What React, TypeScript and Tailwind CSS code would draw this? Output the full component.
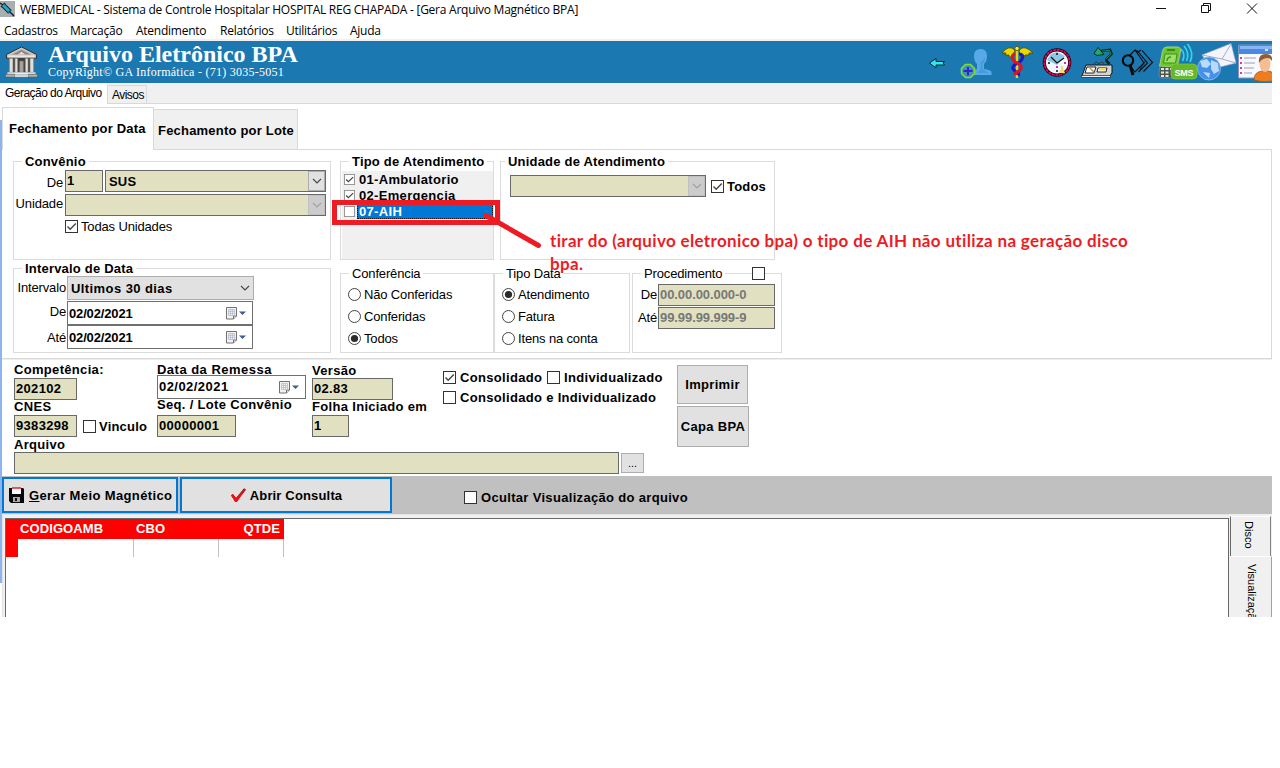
import React from "react";

const BOLD = "font-bold text-[13px] leading-[14px] tracking-[0.32px] whitespace-nowrap";
const ARIALB = "font-bold text-[13px] leading-[14px] tracking-[0.2px] whitespace-nowrap";
const REG = "text-[13px] leading-[14px] tracking-[-0.15px] whitespace-nowrap";
const FIELD = "border border-[#696969] bg-[#e1e1c1] box-border shrink-0";

function Check({ on = false, small = false }: { on?: boolean; small?: boolean }) {
  return (
    <svg className={small ? "h-[11px] w-[11px] shrink-0" : "h-[13px] w-[13px] shrink-0"} viewBox="0 0 13 13">
      <rect x="0.5" y="0.5" width="12" height="12" fill="#fff" stroke={small ? "#8a8a8a" : "#333"} />
      {on && <path d="M2.500 6.500 5.200 9.200 10.800 3.600" fill="none" stroke="#444" strokeWidth="1.400" />}
    </svg>
  );
}

function Radio({ on = false, label }: { on?: boolean; label: string }) {
  return (
    <div className="flex h-[22px] items-center gap-[3px]">
      <svg className="h-[13px] w-[13px] shrink-0" viewBox="0 0 13 13">
        <circle cx="6.5" cy="6.5" r="6" fill="#fff" stroke="#444" />
        {on && <circle cx="6.5" cy="6.5" r="3.6" fill="#2b2b2b" />}
      </svg>
      <span className={`pt-[2px] ${REG}`}>{label}</span>
    </div>
  );
}

function Chevron({ color = "#444" }: { color?: string }) {
  return (
    <svg className="h-[6px] w-[10px] shrink-0" viewBox="0 0 10 6">
      <path d="M1 1 5 5 9 1" fill="none" stroke={color} strokeWidth="1.1" />
    </svg>
  );
}

function Combo({ value = "", disabled = false, className }: { value?: string; disabled?: boolean; className: string }) {
  return (
    <div className={`${FIELD} flex h-[22px] ${className}`}>
      <span className="flex-1 pl-[3px] text-[13px] font-bold leading-[21px] tracking-[0.2px]">{value}</span>
      <span className={disabled ? "flex w-[17px] items-center justify-center border border-[#c0c0c0] bg-[#cccccc]" : "flex w-[17px] items-center justify-center border border-[#adadad] bg-[#e1e1e1]"}>
        <Chevron color={disabled ? "#a0a0a0" : "#444"} />
      </span>
    </div>
  );
}

function DateField({ value, className, textClass }: { value: string; className: string; textClass: string }) {
  return (
    <div className={`flex h-[24px] shrink-0 items-center border border-[#707070] bg-white pl-px ${className}`}>
      <span className={`flex-1 ${textClass}`}>{value}</span>
      <svg className="mr-[6px] h-[13px] w-[20px]" viewBox="0 0 20 13">
        <path d="M.5 .5h10v8.500l-3 3h-7z" fill="#f4f2f0" stroke="#75706c" />
        <path d="M10.500 9h-3v3" fill="#ddd" stroke="#75706c" />
        <path d="M2.500 2.500h6v6h-6zM2.500 4.500h6M2.500 6.500h6M4.500 2.500v6M6.500 2.500v6" fill="none" stroke="#b4bed0" strokeWidth=".8" />
        <path d="M13 4.500h7L16.500 8z" fill="#395d94" />
      </svg>
    </div>
  );
}

function Group({ title, bold = false, className, legend, children }: { title: string; bold?: boolean; className: string; legend: string; children?: React.ReactNode }) {
  return (
    <section className={`shrink-0 border border-[#dcdcdc] ${className}`}>
      <h3 className={`-mt-[8px] h-[14px] w-fit bg-white pt-px ${bold ? ARIALB : REG} ${legend}`}>{title}</h3>
      {children}
    </section>
  );
}

function Field({ value, className, textClass = "text-[13px] tracking-[0.32px]" }: { value?: string; className: string; textClass?: string }) {
  return <div className={`${FIELD} h-[22px] overflow-hidden whitespace-nowrap pl-px font-bold leading-[20px] ${textClass} ${className}`}>{value}</div>;
}

function BuildingIcon() {
  return (
    <svg className="h-[32px] w-[33px] shrink-0" viewBox="0 0 34 34">
      <path d="M1 9 17 1l16 8v4H1z" fill="#c7c2bd" stroke="#2f2b2a" />
      <path d="M7 9 17 4l10 5z" fill="#8d8883" />
      <path d="M13 9l4-3 4 3z" fill="#e6e1dc" />
      <path d="M3 10h28v2H3z" fill="#ece9e4" />
      <path d="M4 13h26v15H4z" fill="#423d3b" />
      <g fill="#e2dfda" stroke="#76716e" strokeWidth=".7">
        <path d="M4 13h4v15H4zM10 13h3v15h-3zM21 13h3v15h-3zM26 13h4v15h-4z" />
        <path d="M15 16h4v12h-4z" fill="#a8a39f" />
      </g>
      <path d="M2 28h30v2H2z" fill="#f0eeea" />
      <path d="M0 30h10v3H0zM24 30h10v3H24z" fill="#b9b4ae" stroke="#555" strokeWidth=".6" />
      <path d="M10 30h14v3H10z" fill="#d8d4cf" />
    </svg>
  );
}

function ToolbarIcons() {
  return (
    <svg className="h-[42px] w-[352px] shrink-0" viewBox="920 41 352 42">
      {/* back arrow */}
      <path d="M929.500 63 936 58.500v3h8.500l-1.500 1.500 1.500 2H936v3z" fill="#32e8ef" stroke="#08282e" strokeWidth="1" />
      {/* add user */}
      <g fill="#58a9e8">
        <path d="M974 56q0-7 6.500-7t6.500 7q0 5-3 8v5q7 1 7.500 3v3h-20q0-5 5.500-6v-5q-3-3-3-8z" />
      </g>
      <path d="M985 57q0 5-2.500 7v5l7 4h-12l3-4v-6z" fill="#3c93d6" opacity=".6" />
      <path d="M965.500 64.500h5l4 4v5l-4 4h-5l-4-4v-5z" fill="#3d91bd" stroke="#7fe02b" strokeWidth="1.600" />
      <path d="M968 67v8.500M963.500 71h9" stroke="#3424c8" strokeWidth="2" />
      {/* caduceus */}
      <path d="M1015 51q-2-4-7-3-3 1-6 5h4l-1 2h4l0 2h3l1-3zM1019 51q2-4 7-3 3 1 7 5h-4l0 2h-4l-1 2h-3l-1-3z" fill="#e8d800" stroke="#4c4400" strokeWidth=".8" />
      <path d="M1017 48v30" stroke="#e7d60c" strokeWidth="2.400" />
      <g fill="none">
        <path d="M1019 54q5 0 3 5-1 3-6 5-5 3-2 6 1 2 4 3 1 1 0 3" stroke="#1919c5" strokeWidth="3.200" />
        <path d="M1015 54q-4 1-2 5 1 3 6 5 4 3 1 6l-4 3q-1 1-1 2" stroke="#e01226" strokeWidth="3.200" />
      </g>
      <path d="M1017 55v6M1017 67v3M1017 75v3" stroke="#e7d60c" strokeWidth="1.600" />
      <circle cx="1017" cy="48.500" r="2.200" fill="#f7ed20" stroke="#4c4400" strokeWidth=".8" />
      {/* clock */}
      <circle cx="1057" cy="62.500" r="12.700" fill="#eef8ff" stroke="#240014" strokeWidth="3.200" />
      <circle cx="1057" cy="62.500" r="12.700" fill="none" stroke="#e30b55" strokeWidth="1.700" strokeDasharray="3 .7" />
      <path d="M1047 60l4-6 6-2 8 4-8 9z" fill="#8dc7e3" />
      <path d="M1051 57l6 6 7-5" fill="none" stroke="#111" strokeWidth="1.300" />
      <path d="M1057 53v2M1048 63h2M1057 70v2" stroke="#111" strokeWidth="1.500" />
      <path d="M1064 63h2M1056 67h2" stroke="#d026c5" strokeWidth="2" />
      <path d="M1061 66h2v2l2 5h-6l2-5z" fill="#f0df70" />
      {/* desk and lamp */}
      <path d="M1086 65h26v8l-3 4h-27l1-4z" fill="#d4d4d4" stroke="#111" />
      <path d="M1081.500 75.500h29v2h-29z" fill="#eee" stroke="#222" strokeWidth=".7" />
      <path d="M1087 67h9l-2 6h-9zM1098 68h9l-1 4h-9z" fill="#fff" stroke="#111" strokeWidth=".9" />
      <path d="M1089 67l5 5" stroke="#c7942b" strokeWidth="1.500" />
      <path d="M1094 64q2-4 5 0 3-4 5 0" fill="none" stroke="#333" />
      <path d="M1098 47.500l-4 6 3 2 7-1z" fill="#21a66b" stroke="#08341e" />
      <path d="M1101 51l9-1 1.500 4-5 5v2l3 3" fill="none" stroke="#08241c" strokeWidth="2.600" />
      <path d="M1102 51l7.500-.5 1.500 3.500-5 5" fill="none" stroke="#21a66b" strokeWidth=".8" />
      <path d="M1099 68h7v2.500h-7z" fill="#f2dc58" />
      {/* search sheets */}
      <g fill="none" stroke="#0a0a0a">
        <path d="M1129 56l6-6 9 13-9 9-4-5M1137 50.500l10.500 12.500-9 9M1142 50.500l10.500 12-9 9M1135 50l3 2M1138 52l3-2" strokeWidth="1.100" />
        <path d="M1144 63l-5 5M1146 60l-6 9" strokeWidth=".8" />
        <circle cx="1128" cy="60.500" r="5.200" strokeWidth="2.100" />
        <path d="M1130 65l3 10" strokeWidth="3" />
      </g>
      {/* phone with SMS label */}
      <path d="M1162 51q1-4 5-4h10q4 0 4 4l-4 22q-1 5-5 5h-9q-5 0-4-5z" fill="#4b5650" stroke="#87938a" strokeWidth=".7" />
      <path d="M1163 50q1-3 4-3h10q4 0 3.500 4l-3 14q-8 3-18 1z" fill="#6bc62e" stroke="#b3e78c" strokeWidth=".7" />
      <path d="M1165 54h12l-1.500 9h-12z" fill="#9ede63" stroke="#3d921e" />
      <path d="M1167 50h8" stroke="#33701c" strokeWidth="1.500" />
      <path d="M1167 61q0-4 4-4" stroke="#3d921e" strokeWidth="1.500" fill="none" />
      <path d="M1161 69h3M1165.500 69h3M1170 69h3M1161 72.500h3M1165.500 72.500h3M1161 76h3M1165.500 76h3" stroke="#e5e8e5" strokeWidth="1.800" />
      <path d="M1181 49q5 5 1.500 12M1184 46q6 7 2.500 15M1187.500 44q7 9 2.500 18" fill="none" stroke="#31d7e5" strokeWidth="1.700" />
      <rect x="1171" y="64" width="26" height="15" rx="4" fill="#68b72b" stroke="#82d345" strokeWidth=".6" />
      <text x="1174.500" y="75.500" fontFamily="Liberation Sans, sans-serif" fontWeight="700" fontSize="9" fill="#fff" textLength="19">SMS</text>
      {/* globe with envelope */}
      <path d="M1202 55l29-11.500 5 19.500-24 6z" fill="#f4f5fb" stroke="#a5abc2" strokeWidth=".6" />
      <path d="M1202 55l20 4 9-15M1222 59l14 4" fill="none" stroke="#a7abc4" />
      <circle cx="1209" cy="68.500" r="11.500" fill="#4690e8" stroke="#91c2f4" strokeWidth=".8" />
      <path d="M1200 61l7-2 4 5-4 4-5-1zM1211 60l7 3 1 8-5 3-3-5zM1203 72l7 1-1 5z" fill="#cce8ff" opacity=".85" />
      {/* contact card */}
      <path d="M1238.500 45h34v33h-34z" fill="#f8f9ff" stroke="#8295be" />
      <path d="M1239 45h34v9h-34z" fill="#4c88dd" />
      <path d="M1240 46h32v3h-32z" fill="#88b5f3" />
      <path d="M1265 50h3" stroke="#d5e5ff" strokeWidth="2" />
      <path d="M1244 58h12M1244 63h11M1244 68h10M1244 73h8" stroke="#999db0" />
      <path d="M1240 58h2M1240 63h2M1240 68h2M1240 73h2" stroke="#dd37ac" strokeWidth="2" />
      <path d="M1254 80q0-8 8-9h6q4 0 5 3v7q-10 2-19-1z" fill="#f07c20" stroke="#b15216" strokeWidth=".8" />
      <ellipse cx="1265" cy="64" rx="5.500" ry="8" fill="#f5bd91" />
      <path d="M1259 63q-1-9 6.500-9t6.500 7q-2-3-4-3-6 0-9 5z" fill="#8b5e36" />
    </svg>
  );
}

function TitleBar() {
  return (
    <>
      <div className="flex h-[20px] items-start">
        <svg className="h-[17px] w-[15px]" viewBox="0 0 15 17">
          <path d="M0 1h15v16H0z" fill="#a9aeae" />
          <path d="M0 3 3 5M1 7l4-4" stroke="#222" strokeWidth="1.500" />
          <path d="M3 5l7 7" stroke="#10272f" strokeWidth="5" />
          <path d="M3 5l7 7" stroke="#29a8cc" strokeWidth="3" />
          <path d="M9 11l5 5" stroke="#123" strokeWidth="1.500" />
        </svg>
        <span className="ml-[5px] flex-1 whitespace-nowrap font-['Open_Sans',sans-serif] text-[12px] leading-[20px] tracking-[-0.25px]">
          WEBMEDICAL - Sistema de Controle Hospitalar HOSPITAL REG CHAPADA - [Gera Arquivo Magnético BPA]
        </span>
        <svg className="mr-[14px] h-[16px] w-[102px]" viewBox="0 0 102 16" fill="none" stroke="#111" strokeWidth="1">
          <path d="M0 8.500h10M45.500 5.500h7v7h-7zM47.500 5.500v-2h7v7h-2" />
          <path d="M91 3.500l10 10M101 3.500l-10 10" />
        </svg>
      </div>
      <nav className="grid h-[19px] grid-cols-[66px_66px_84px_66px_64px_60px] whitespace-nowrap pl-[4px] font-['Open_Sans',sans-serif] text-[12px] leading-[22px] tracking-[-0.25px]">
        <span>Cadastros</span><span>Marcação</span><span>Atendimento</span><span>Relatórios</span><span>Utilitários</span><span>Ajuda</span>
      </nav>
    </>
  );
}

function FilterPanel() {
  return (
    <div className="flex h-[209px] border-b border-r border-[#d9d9d9]">
      <div className="ml-[11px] mt-[11px] flex w-[318px] flex-col gap-[8px]">
        <Group title="Convênio" bold legend="ml-[8px] px-[3px]" className="h-[99px]">
          <div className="mt-[2px] flex">
            <span className={`w-[51px] pr-[2px] pt-[6px] text-right ${REG}`}>De</span>
            <Field value="1" className="w-[38px]" />
            <Combo value="SUS" className="ml-[2px] w-[221px]" />
          </div>
          <div className="mt-[2px] flex">
            <span className={`w-[51px] pr-[2px] pt-[3px] text-right ${REG}`}>Unidade</span>
            <Combo disabled className="w-[261px]" />
          </div>
          <div className="ml-[51px] mt-[4px] flex h-[13px] items-center gap-[3px]">
            <Check on /><span className={REG}>Todas Unidades</span>
          </div>
        </Group>
        <Group title="Intervalo de Data" bold legend="ml-[8px] px-[3px]" className="h-[85px]">
          <div className="mt-px flex">
            <span className={`w-[53px] pr-px pt-[5px] text-right ${REG}`}>Intervalo</span>
            <div className="flex h-[24px] w-[187px] items-center justify-between border border-[#adadad] bg-[#e1e1e1] pl-[3px] pr-[3px]">
              <span className="whitespace-nowrap pt-[2px] text-[13px] font-bold leading-[14px] tracking-[0.42px]">Ultimos 30 dias</span><Chevron />
            </div>
          </div>
          <div className="mt-px flex">
            <span className={`w-[53px] pr-px pt-[4px] text-right ${REG}`}>De</span>
            <DateField value="02/02/2021" className="w-[186px]" textClass="pt-px text-[13px] font-bold tracking-[-0.15px]" />
          </div>
          <div className="flex">
            <span className={`w-[53px] pr-px pt-[6px] text-right ${REG}`}>Até</span>
            <DateField value="02/02/2021" className="w-[186px]" textClass="pt-px text-[13px] font-bold tracking-[-0.15px]" />
          </div>
        </Group>
      </div>
      <div className="ml-[9px] mt-[11px] flex flex-col gap-[13px]">
        <div className="flex gap-[6px]">
          <Group title="Tipo de Atendimento" bold legend="ml-[8px] px-[3px]" className="h-[99px] w-[154px]">
            <div className="ml-px mt-[3px] h-[88px] w-[151px] bg-[#f0f0f0]">
              <div className="flex h-[16px] items-center gap-[4px] pl-[2px]"><Check on small /><span className={`pt-[2px] ${BOLD}`}>01-Ambulatorio</span></div>
              <div className="flex h-[16px] items-center gap-[4px] pl-[2px]"><Check on small /><span className={`pt-[2px] ${BOLD}`}>02-Emergencia</span></div>
              <div className="flex h-[16px] items-center gap-[2px] pl-[2px]">
                <Check small />
                <span className={`h-[16px] flex-1 border border-dotted border-[#111] bg-[#0078d7] pl-px pt-px text-white ${BOLD}`}>07-AIH</span>
              </div>
            </div>
          </Group>
          <Group title="Unidade de Atendimento" bold legend="ml-[4px] px-[3px]" className="h-[99px] w-[275px]">
            <div className="ml-[9px] mt-[7px] flex items-center">
              <Combo disabled className="w-[196px]" />
              <span className="ml-[5px] flex items-center gap-[3px]"><Check on /><span className={`pt-[2px] ${ARIALB}`}>Todos</span></span>
            </div>
          </Group>
        </div>
        <div className="flex">
          <Group title="Conferência" legend="ml-[8px] px-[3px]" className="h-[80px] w-[154px]">
            <div className="ml-[7px] mt-[3px]"><Radio label="Não Conferidas" /><Radio label="Conferidas" /><Radio on label="Todos" /></div>
          </Group>
          <Group title="Tipo Data" legend="ml-[8px] px-[3px]" className="h-[80px] w-[136px]">
            <div className="ml-[7px] mt-[3px]"><Radio on label="Atendimento" /><Radio label="Fatura" /><Radio label="Itens na conta" /></div>
          </Group>
          <Group title="Procedimento" legend="ml-[8px] px-[3px]" className="ml-[2px] h-[80px] w-[150px]">
            <div className="-mt-[13px] ml-[119px] h-[13px] w-[13px]"><Check /></div>
            <div className="mt-[4px] flex">
              <span className={`w-[25px] pr-px pt-[4px] text-right ${REG}`}>De</span>
              <Field value="00.00.00.000-0" textClass="text-[13px] text-[#777] tracking-[-0.08px]" className="w-[117px]" />
            </div>
            <div className="mt-px flex">
              <span className={`w-[25px] pr-px pt-[4px] text-right ${REG}`}>Até</span>
              <Field value="99.99.99.999-9" textClass="text-[13px] text-[#777] tracking-[-0.08px]" className="w-[117px]" />
            </div>
          </Group>
        </div>
      </div>
    </div>
  );
}

function FilePanel() {
  return (
    <div className="h-[116px] pl-[12px] pt-[3px]">
      <div className="flex h-[74px]">
        <div className="w-[143px]">
          <div className={`h-[15px] ${BOLD}`}>Competência:</div>
          <Field value="202102" className="w-[63px]" />
          <div className={`h-[15px] ${BOLD}`}>CNES</div>
          <div className="flex items-center">
            <Field value="9383298" className="w-[63px]" />
            <span className="ml-[6px] flex items-center gap-[3px]"><Check /><span className={`pt-[2px] ${ARIALB}`}>Vinculo</span></span>
          </div>
        </div>
        <div className="w-[155px]">
          <div className="h-[12px] whitespace-nowrap text-[13px] font-bold leading-[14px] tracking-[0.48px]">Data da Remessa</div>
          <DateField value="02/02/2021" className="w-[149px]" textClass="text-[13px] font-bold tracking-[0.45px]" />
          <div className={`-mt-px h-[17px] ${BOLD}`}>Seq. / Lote Convênio</div>
          <Field value="00000001" className="w-[79px]" />
        </div>
        <div className="w-[131px]">
          <div className={`h-[15px] pt-px ${BOLD}`}>Versão</div>
          <Field value="02.83" className="w-[81px]" />
          <div className={`h-[15px] ${BOLD}`}>Folha Iniciado em</div>
          <Field value="1" className="w-[37px]" />
        </div>
        <div className="w-[234px] pt-[7px]">
          <div className="flex h-[14px] items-center">
            <Check on /><span className={`ml-[4px] w-[87px] pt-[2px] ${BOLD}`}>Consolidado</span>
            <Check /><span className={`ml-[4px] pt-[2px] ${BOLD}`}>Individualizado</span>
          </div>
          <div className="mt-[6px] flex h-[14px] items-center"><Check /><span className={`ml-[4px] pt-[2px] ${BOLD}`}>Consolidado e Individualizado</span></div>
        </div>
        <div className="flex flex-col gap-[2px] pt-[2px]">
          <button className={`h-[39px] w-[71px] shrink-0 border border-[#adadad] bg-[#e1e1e1] pt-px ${BOLD}`}>Imprimir</button>
          <button className={`h-[41px] w-[72px] shrink-0 border border-[#adadad] bg-[#e1e1e1] pt-px ${BOLD}`}>Capa BPA</button>
        </div>
      </div>
      <div className={`h-[15px] pt-px ${BOLD}`}>Arquivo</div>
      <div className="flex items-center gap-[2px]">
        <Field className="w-[605px]" />
        <button className="h-[20px] w-[23px] border border-[#adadad] bg-[#e1e1e1] text-[11px] leading-[14px]">...</button>
      </div>
    </div>
  );
}

function ActionBar() {
  return (
    <div className="flex h-[38px] items-center bg-[#c0c0c0]">
      <button className={`flex h-[36px] w-[176px] items-center border-2 border-[#0078d7] bg-[#e1e1e1] pl-[5px] ${BOLD}`}>
        <svg className="mr-[5px] h-[16px] w-[15px]" viewBox="0 0 15 16">
          <path d="M1 1h13l1 1v14H2l-2-2V1z" fill="#080808" />
          <path d="M3 1h9v6H3z" fill="#fff" /><path d="M3 1h9" stroke="#e22" strokeWidth="1.500" />
          <path d="M4 10h7v5H4z" fill="#aaa" /><path d="M6 11h2v3H6z" fill="#111" />
        </svg>
        <span className="pt-[2px] tracking-[0.38px]"><u>G</u>erar Meio Magnético</span>
      </button>
      <button className={`ml-[2px] flex h-[36px] w-[212px] items-center justify-center border-2 border-[#0078d7] bg-[#e1e1e1] ${BOLD}`}>
        <svg className="mr-[3px] h-[14px] w-[17px]" viewBox="0 0 17 14">
          <path d="M2 7l4 5 9-11" fill="none" stroke="#4a1111" strokeWidth="2.400" />
          <path d="M1 7l2-1 3 4 8-9h2L7 14H5z" fill="#f20d12" />
        </svg>
        <span className="pt-[2px] tracking-[0.16px]">Abrir Consulta</span>
      </button>
      <span className="ml-[72px] mt-[4px] flex items-center gap-[4px]"><Check /><span className={`pt-[2px] ${BOLD}`}>Ocultar Visualização do arquivo</span></span>
    </div>
  );
}

function ResultGrid() {
  return (
    <div className="flex h-[103px] overflow-hidden bg-[#f0f0f0]">
      <div className="h-[103px] w-[1227px] border-l border-t border-[#e3e3e3] pl-[2px] pt-[3px]">
        <div className="flex h-[99px] w-[1224px] flex-col border-l border-r border-t border-[#696969] bg-white text-[13px] font-bold leading-[20px] tracking-[0.1px]">
          <div className="flex h-[20px] w-[278px] bg-[#ff0000] text-white">
            <span className="w-[128px] pl-[14px]">CODIGOAMB</span>
            <span className="w-[85px] pl-[2px]">CBO</span>
            <span className="flex-1 pr-[4px] text-right">QTDE</span>
          </div>
          <div className="flex h-[18px]">
            <span className="w-[12px] bg-[#ff0000]" />
            <span className="w-[116px] border-r border-[#c0c0c0]" />
            <span className="w-[85px] border-r border-[#c0c0c0]" />
            <span className="w-[65px] border-r border-[#c0c0c0]" />
          </div>
        </div>
      </div>
      <div className="flex flex-1 flex-col text-[11px]">
        <div className="ml-px mt-[2px] h-[40px] w-[41px] border-l border-r border-t border-l-[#696969] border-r-[#808080] border-t-white pl-[8px] pt-[4px]">
          <span className="block leading-[20px] [writing-mode:vertical-rl]">Disco</span>
        </div>
        <div className="h-[61px] w-[43px] overflow-hidden border-r border-t border-r-[#a0a0a0] border-t-white pl-[13px] pt-[7px]">
          <span className="block whitespace-nowrap leading-[20px] [writing-mode:vertical-rl]">Visualização</span>
        </div>
      </div>
    </div>
  );
}

export default function App() {
  return (
    <div className="h-[768px] w-[1280px] overflow-hidden bg-white">
      <div className="relative h-[617px] w-[1272px] overflow-hidden bg-white font-['Liberation_Sans',sans-serif] text-black">
        <TitleBar />
        <div className="h-[2px] bg-[#f0f0f0]" />
        <header className="flex h-[42px] items-center bg-[#1c78b0] pl-[5px] text-white">
          <BuildingIcon />
          <div className="-mt-[3px] ml-[10px] flex-1 whitespace-nowrap font-['Liberation_Serif',serif]">
            <h1 className="text-[24px] font-bold leading-[23px]">Arquivo Eletrônico BPA</h1>
            <p className="-mt-px text-[12px] leading-[14px] tracking-[0.25px]">CopyRight© GA Informática - (71) 3035-5051</p>
          </div>
          <ToolbarIcons />
        </header>
        <div className="flex h-[21px] items-end border-b border-[#d9d9d9] bg-[#f0f0f0] text-[12px] tracking-[-0.53px]">
          <span className="-mb-px h-[21px] w-[107px] whitespace-nowrap bg-white pl-[5px] leading-[20px]">Geração do Arquivo</span>
          <span className="h-[18px] w-[40px] border border-b-0 border-[#d9d9d9] pl-[4px] leading-[18px]">Avisos</span>
        </div>
        <div className="flex">
          <div className="mt-[16px] h-[463px] w-[2px] bg-[#8cb4ee]" />
          <div className="w-[1270px]">
            <div className="flex h-[46px] items-end pt-[3px]">
              <div className={`h-[43px] w-[152px] border-l border-r border-t border-[#d9d9d9] pl-[6px] pt-[14px] ${ARIALB}`}>Fechamento por Data</div>
              <div className={`h-[41px] w-[144px] border-b border-r border-t border-[#d9d9d9] bg-[#f0f0f0] pl-[4px] pt-[14px] ${ARIALB}`}>Fechamento por Lote</div>
              <div className="h-px flex-1 bg-[#d9d9d9]" />
            </div>
            <FilterPanel />
            <div className="h-px bg-[#eeeeee]" />
            <FilePanel />
            <ActionBar />
            <ResultGrid />
          </div>
        </div>
        <svg className="pointer-events-none absolute left-[330px] top-[198px] h-[54px] w-[216px]" viewBox="330 198 216 54">
          <rect x="334.500" y="202.500" width="163" height="20" fill="none" stroke="#ed1c24" strokeWidth="5" />
          <path d="M486 215.500 538.500 245.500" stroke="#ed1c24" strokeWidth="5" strokeLinecap="round" />
        </svg>
        <p className="absolute left-[550px] top-[229px] w-[600px] whitespace-nowrap font-['Lato',sans-serif] text-[17px] font-bold leading-[23px] tracking-[0.34px] text-[#ed1c24]">
          tirar do (arquivo eletronico bpa) o tipo de AIH não utiliza na geração disco<br />bpa.
        </p>
      </div>
    </div>
  );
}
